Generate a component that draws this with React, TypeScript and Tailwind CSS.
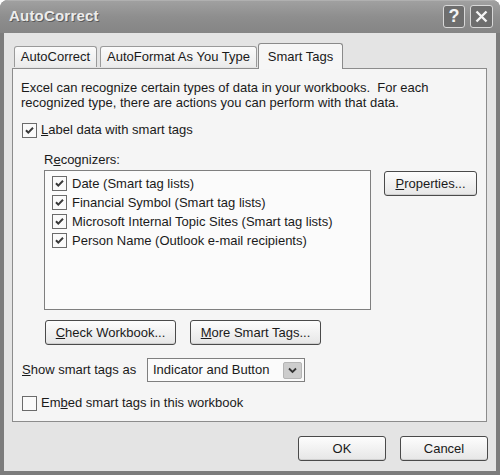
import React from "react";

const font = { fontFamily: '"Liberation Sans", Arial, sans-serif' };

function Check({ checked }: { checked: boolean }) {
  return (
    <span className="w-[15px] h-[15px] border border-[#6b6b6b] bg-[#fafafa] flex items-center justify-center shrink-0">
      {checked && (
        <svg width="11" height="11" viewBox="0 0 11 11">
          <path d="M2 5.2 L4.3 7.6 L9 2.8" fill="none" stroke="#3a3a3a" strokeWidth="2" />
        </svg>
      )}
    </span>
  );
}

function Btn({ children, w }: { children: React.ReactNode; w: string }) {
  return (
    <div
      className={`${w} h-[25px] rounded-[3px] border border-[#4a4a4a] bg-gradient-to-b from-[#fdfdfd] to-[#e6e6e6] flex items-center justify-center text-[13px] text-[#1a1a1a] shadow-[inset_0_-1px_0_#cfcfcf]`}
    >
      {children}
    </div>
  );
}

export default function App() {
  return (
    <div style={font} className="w-[500px] h-[475px] bg-[#7c7c7c] rounded-t-[8px] overflow-hidden flex flex-col">
      {/* Title bar */}
      <div className="h-[33px] shrink-0 bg-gradient-to-b from-[#a0a0a0] via-[#8e8e8e] to-[#858585] flex items-center justify-between pl-[9px] pr-[7px] border-t border-[#b0b0b0]">
        <span className="text-[15px] font-bold text-[#ececec] tracking-[0.2px] [text-shadow:1px_1px_0_#5a5a5a] -mt-[1px]">AutoCorrect</span>
        <div className="flex gap-[5px] -mt-[2px]">
          <div className="w-[22px] h-[23px] rounded-[3px] border border-[#d8d8d8] bg-[#6e6e6e] flex items-center justify-center text-[#f4f4f4] text-[18px] font-bold leading-none">?</div>
          <div className="w-[23px] h-[23px] rounded-[3px] border border-[#d8d8d8] bg-[#6e6e6e] flex items-center justify-center">
            <svg width="13" height="13" viewBox="0 0 13 13">
              <path d="M1.5 1.5 L11.5 11.5 M11.5 1.5 L1.5 11.5" stroke="#f4f4f4" strokeWidth="2.4" />
            </svg>
          </div>
        </div>
      </div>
      {/* Body */}
      <div className="flex-1 mx-[4px] mb-[4px] bg-[#e4e4e4] flex flex-col pt-[10px]">
        <div className="ml-[8px] mr-[9px] flex flex-col">
          {/* Tabs */}
          <div className="flex items-end pl-[2px] h-[25px] relative z-10 text-[13px] text-[#1a1a1a]">
            <div className="w-[83px] h-[21px] border border-b-0 border-[#9a9a9a] rounded-t-[3px] bg-gradient-to-b from-[#fbfbfb] to-[#ebebeb] flex items-center justify-center mb-[1px]">AutoCorrect</div>
            <div className="ml-[3px] w-[157px] h-[21px] border border-b-0 border-[#9a9a9a] rounded-t-[3px] bg-gradient-to-b from-[#fbfbfb] to-[#ebebeb] flex items-center justify-center mb-[1px]">AutoFormat As You Type</div>
            <div className="ml-[1px] w-[85px] h-[26px] border border-b-0 border-[#8a8a8a] rounded-t-[3px] bg-[#f6f6f6] flex items-start pt-[3px] justify-center -mb-[1px]">Smart Tags</div>
          </div>
          {/* Panel */}
          <div className="h-[354px] border border-[#8c8c8c] bg-[#f5f5f5] text-[13px] text-[#1a1a1a] flex flex-col pl-[8px]">
            <div className="mt-[11px] leading-[15px]">
              <div>Excel can recognize certain types of data in your workbooks.&nbsp; For each</div>
              <div>recognized type, there are actions you can perform with that data.</div>
            </div>
            <div className="mt-[12px] ml-[1px] flex items-center gap-[4px] h-[16px]">
              <Check checked />
              <span><u>L</u>abel data with smart tags</span>
            </div>
            <div className="mt-[14px] ml-[23px] leading-[15px]">R<u>e</u>cognizers:</div>
            <div className="flex mt-[3px]">
              <div className="ml-[23px] w-[327px] h-[140px] border border-[#7f7f7f] bg-[#fbfbfb] pt-[3px] pl-[7px] flex flex-col">
                {[
                  "Date (Smart tag lists)",
                  "Financial Symbol (Smart tag lists)",
                  "Microsoft Internal Topic Sites (Smart tag lists)",
                  "Person Name (Outlook e-mail recipients)",
                ].map((t) => (
                  <div key={t} className="h-[19px] flex items-center gap-[5px]">
                    <Check checked />
                    <span>{t}</span>
                  </div>
                ))}
              </div>
              <div className="ml-[13px] mt-[1px]">
                <Btn w="w-[93px]">
                  <span><u>P</u>roperties...</span>
                </Btn>
              </div>
            </div>
            <div className="flex mt-[10px] ml-[24px] gap-[14px]">
              <Btn w="w-[131px]">
                <span><u>C</u>heck Workbook...</span>
              </Btn>
              <Btn w="w-[131px]">
                <span><u>M</u>ore Smart Tags...</span>
              </Btn>
            </div>
            <div className="flex items-center mt-[13px] ml-[1px]">
              <span className="w-[125px]"><u>S</u>how smart tags as</span>
              <div className="w-[158px] h-[24px] border border-[#7f7f7f] bg-[#fbfbfb] flex items-center justify-between pl-[5px] pr-[2px]">
                <span>Indicator and Button</span>
                <div className="w-[19px] h-[17px] rounded-[2px] bg-[#cdcdcd] border border-[#b5b5b5] flex items-center justify-center">
                  <svg width="9" height="7" viewBox="0 0 9 7">
                    <path d="M1 1.5 L4.5 5 L8 1.5" fill="none" stroke="#333" strokeWidth="1.8" />
                  </svg>
                </div>
              </div>
            </div>
            <div className="mt-[13px] ml-[1px] flex items-center gap-[4px] h-[16px]">
              <Check checked={false} />
              <span>Em<u>b</u>ed smart tags in this workbook</span>
            </div>
          </div>
        </div>
        {/* OK / Cancel */}
        <div className="flex justify-end gap-[14px] mt-[14px] mr-[8px]">
          <Btn w="w-[88px]">OK</Btn>
          <Btn w="w-[88px]">Cancel</Btn>
        </div>
      </div>
    </div>
  );
}
